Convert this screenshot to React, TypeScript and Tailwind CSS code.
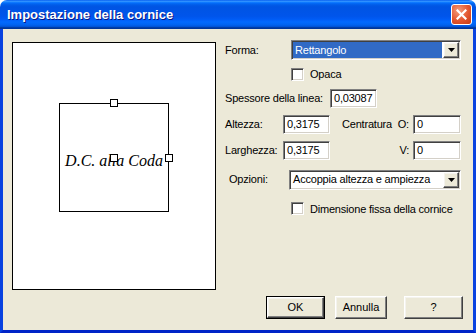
import React from 'react';

const sunken =
  'border border-t-[#808080] border-l-[#808080] border-b-white border-r-white shadow-[inset_1px_1px_0_#404040,inset_-1px_-1px_0_#d4d0c8]';
const raised =
  'border border-t-white border-l-white border-b-[#404040] border-r-[#404040] shadow-[inset_-1px_-1px_0_#808080,inset_1px_1px_0_#f4f3ee]';

function Arrow() {
  return (
    <svg width="7" height="4" viewBox="0 0 7 4">
      <path d="M0 0h7L3.5 4z" fill="#000" />
    </svg>
  );
}

function Combo({ value, selected, width }: { value: string; selected?: boolean; width: string }) {
  return (
    <div className={`flex h-[20px] ${width} bg-white p-[1px] ${sunken}`}>
      <div
        className={`flex-1 flex items-center pl-[2px] mr-[1px] ${
          selected ? 'bg-[#316AC5] text-white' : 'text-black'
        }`}
      >
        {value}
      </div>
      <div className={`w-[16px] flex items-center justify-center bg-[#ECE9D8] ${raised}`}>
        <Arrow />
      </div>
    </div>
  );
}

function Field({ value, width }: { value: string; width: string }) {
  return (
    <div className={`h-[19px] ${width} bg-white flex items-center pl-[3px] ${sunken}`}>{value}</div>
  );
}

function Check({ label }: { label: string }) {
  return (
    <div className="flex items-center gap-[6px]">
      <div className={`w-[13px] h-[13px] bg-white ${sunken}`} />
      <span>{label}</span>
    </div>
  );
}

function Handle() {
  return <div className="w-[8px] h-[8px] bg-white border border-black" />;
}

export default function App() {
  return (
    <div className="w-[476px] h-[333px] bg-white flex flex-col font-['Liberation_Sans',Arial,sans-serif] text-[11px] text-black">
      {/* title bar */}
      <div className="h-[29px] rounded-t-[7px] flex items-center justify-between pl-[7px] pr-[4px] bg-[linear-gradient(to_bottom,#0058EE_0%,#3593FF_4%,#288EFF_6%,#127DFF_8%,#036FFC_10%,#0262EE_14%,#0057E5_20%,#0054E3_24%,#0055EB_56%,#005BF5_66%,#026AFE_76%,#0062EF_86%,#0052D6_92%,#0040AB_94%,#003092_100%)]">
        <span className="text-white font-bold text-[13px] [text-shadow:1px_1px_#0a1883]">
          Impostazione della cornice
        </span>
        <div className="w-[21px] h-[21px] rounded-[3px] border border-white bg-[radial-gradient(circle_at_35%_30%,#F39C7C,#E2552E_55%,#C43A14)] flex items-center justify-center">
          <svg width="11" height="11" viewBox="0 0 11 11">
            <path d="M1.5 1.5l8 8M9.5 1.5l-8 8" stroke="#fff" strokeWidth="2.2" strokeLinecap="square" />
          </svg>
        </div>
      </div>

      {/* body */}
      <div className="flex-1 flex flex-col bg-[#ECE9D8] border-x-[3px] border-b-[3px] border-x-[#0842E0] border-b-[#0024C8]">
        <div className="flex">
          {/* preview */}
          <div className="ml-[9px] mt-[13px] w-[204px] h-[248px] border border-black bg-white flex justify-center pt-[60px]">
            <div className="relative w-[110px] h-[109px] border border-black flex items-center justify-center pt-[6px]">
              <span className="font-['Liberation_Serif',serif] italic text-[16px] whitespace-nowrap">
                D.C. alla Coda
              </span>
              <div className="absolute -top-[5px] left-[50px]">
                <Handle />
              </div>
              <div className="absolute top-[50px] left-[50px]">
                <Handle />
              </div>
              <div className="absolute top-[50px] -right-[5px]">
                <Handle />
              </div>
            </div>
          </div>

          {/* form */}
          <div className="ml-[9px] mt-[11px] flex flex-col tracking-[-0.2px]">
            <div className="flex items-center">
              <span className="w-[66px]">Forma:</span>
              <Combo value="Rettangolo" selected width="w-[170px]" />
            </div>
            <div className="mt-[6px] ml-[66px]">
              <Check label="Opaca" />
            </div>
            <div className="mt-[6px] flex items-center">
              <span className="w-[105px]">Spessore della linea:</span>
              <Field value="0,03087" width="w-[47px]" />
            </div>
            <div className="mt-[7px] flex items-center">
              <span className="w-[58px]">Altezza:</span>
              <Field value="0,3175" width="w-[47px]" />
              <span className="ml-[12px] w-[71px]">Centratura&nbsp;&nbsp;O:</span>
              <Field value="0" width="w-[48px]" />
            </div>
            <div className="mt-[7px] flex items-center">
              <span className="w-[58px]">Larghezza:</span>
              <Field value="0,3175" width="w-[47px]" />
              <span className="ml-[12px] w-[71px] text-right pr-[4px]">V:</span>
              <Field value="0" width="w-[48px]" />
            </div>
            <div className="mt-[10px] flex items-center">
              <span className="ml-[4px] w-[60px]">Opzioni:</span>
              <Combo value="Accoppia altezza e ampiezza" width="w-[172px]" />
            </div>
            <div className="mt-[11px] ml-[66px]">
              <Check label="Dimensione fissa della cornice" />
            </div>
          </div>
        </div>

        {/* buttons */}
        <div className="mt-[6px] flex justify-end pr-[10px]">
          <div className="w-[59px] h-[23px] border border-black">
            <div className={`w-full h-full bg-[#ECE9D8] flex items-center justify-center ${raised}`}>OK</div>
          </div>
          <div className={`ml-[10px] w-[52px] h-[23px] bg-[#ECE9D8] flex items-center justify-center ${raised}`}>
            Annulla
          </div>
          <div className={`ml-[17px] w-[59px] h-[23px] bg-[#ECE9D8] flex items-center justify-center ${raised}`}>
            ?
          </div>
        </div>
      </div>
    </div>
  );
}
